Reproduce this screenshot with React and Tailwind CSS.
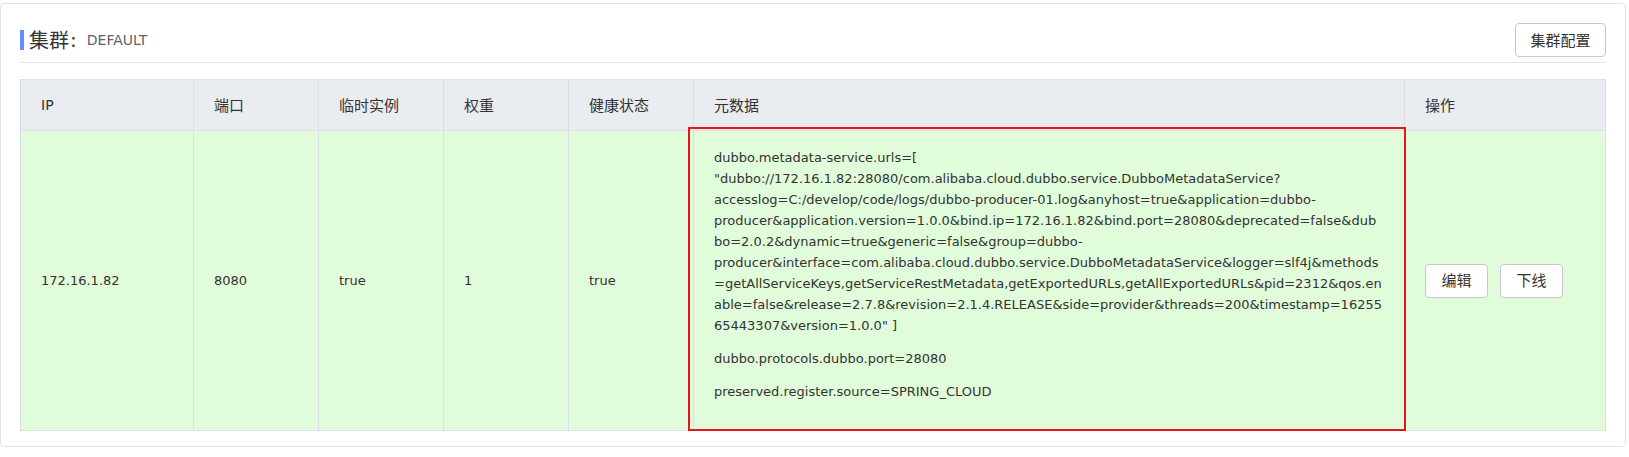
const LATIN = "font-['DejaVu_Sans','Noto_Sans_CJK_SC',sans-serif]";
const ZH = "font-['Noto_Sans_CJK_SC','DejaVu_Sans',sans-serif]";

const urlLines = [
  'dubbo.metadata-service.urls=[',
  '"dubbo://172.16.1.82:28080/com.alibaba.cloud.dubbo.service.DubboMetadataService?',
  'accesslog=C:/develop/code/logs/dubbo-producer-01.log&anyhost=true&application=dubbo-',
  'producer&application.version=1.0.0&bind.ip=172.16.1.82&bind.port=28080&deprecated=false&dub',
  'bo=2.0.2&dynamic=true&generic=false&group=dubbo-',
  'producer&interface=com.alibaba.cloud.dubbo.service.DubboMetadataService&logger=slf4j&methods',
  '=getAllServiceKeys,getServiceRestMetadata,getExportedURLs,getAllExportedURLs&pid=2312&qos.en',
  'able=false&release=2.7.8&revision=2.1.4.RELEASE&side=provider&threads=200&timestamp=16255',
  '65443307&version=1.0.0" ]',
];

function Th({ children, zh = true }) {
  return (
    <th
      className={`h-[51px] px-5 text-left font-normal align-middle border border-[#dcdfe6] bg-[#e9ecf0] text-[#333] ${
        zh ? `${ZH} text-[15px]` : `${LATIN} text-[14px]`
      }`}
    >
      {children}
    </th>
  );
}

function Td({ children }) {
  return (
    <td className={`px-5 align-middle border border-[#dcdfe6] text-[#333] text-[13px] ${LATIN}`}>
      {children}
    </td>
  );
}

export default function App() {
  return (
    <div className="bg-white w-[1629px] h-[457px] pt-[3px]">
      <div className="w-[1626px] border border-[#e2e2e2] rounded-[4px] px-[19px] pt-[19px] pb-[15px]">
        <div className="flex items-center justify-between h-[34px]">
          <div className="flex items-center">
            <span className="block w-[4px] h-[20px] bg-[#5b8ff9]"></span>
            <span className={`ml-[5px] text-[20px] leading-[28px] text-[#333] ${ZH}`}>集群</span>
            <span className={`ml-[1px] text-[20px] leading-[28px] text-[#333] ${LATIN}`}>:</span>
            <span className={`ml-[10px] text-[14px] leading-[28px] text-[#606266] ${LATIN}`}>DEFAULT</span>
          </div>
          <button
            className={`w-[91px] h-[34px] border border-[#c8c8cc] rounded-[4px] bg-white text-[15px] text-[#333] ${ZH}`}
          >
            集群配置
          </button>
        </div>
        <div className="mt-[5px] h-px bg-[#e4e4e4]"></div>
        <div className="relative mt-[16px]">
          <table className="w-[1585px] table-fixed border-collapse">
            <colgroup>
              <col className="w-[173px]" />
              <col className="w-[125px]" />
              <col className="w-[125px]" />
              <col className="w-[125px]" />
              <col className="w-[125px]" />
              <col className="w-[711px]" />
              <col className="w-[201px]" />
            </colgroup>
            <thead>
              <tr>
                <Th zh={false}>IP</Th>
                <Th>端口</Th>
                <Th>临时实例</Th>
                <Th>权重</Th>
                <Th>健康状态</Th>
                <Th>元数据</Th>
                <Th>操作</Th>
              </tr>
            </thead>
            <tbody>
              <tr className="bg-[#e1fcda]">
                <Td>172.16.1.82</Td>
                <Td>8080</Td>
                <Td>true</Td>
                <Td>1</Td>
                <Td>true</Td>
                <td className={`px-5 py-4 align-middle border border-[#dcdfe6] text-[#333] text-[13px] leading-[21px] ${LATIN}`}>
                  <div className="mb-3">
                    {urlLines.map((l, i) => (
                      <div key={i} className="whitespace-nowrap">
                        {l}
                      </div>
                    ))}
                  </div>
                  <div className="mb-3">dubbo.protocols.dubbo.port=28080</div>
                  <div className="mb-3">preserved.register.source=SPRING_CLOUD</div>
                </td>
                <td className="px-5 align-middle border border-[#dcdfe6]">
                  <div className="flex gap-3">
                    <button
                      className={`w-[63px] h-[34px] border border-[#c8c8cc] rounded-[4px] bg-white text-[15px] text-[#333] ${ZH}`}
                    >
                      编辑
                    </button>
                    <button
                      className={`w-[63px] h-[34px] border border-[#c8c8cc] rounded-[4px] bg-white text-[15px] text-[#333] ${ZH}`}
                    >
                      下线
                    </button>
                  </div>
                </td>
              </tr>
            </tbody>
          </table>
          <div className="absolute left-[668px] top-[48px] w-[718px] h-[304px] border-2 border-[#e8141c] pointer-events-none"></div>
        </div>
      </div>
    </div>
  );
}
